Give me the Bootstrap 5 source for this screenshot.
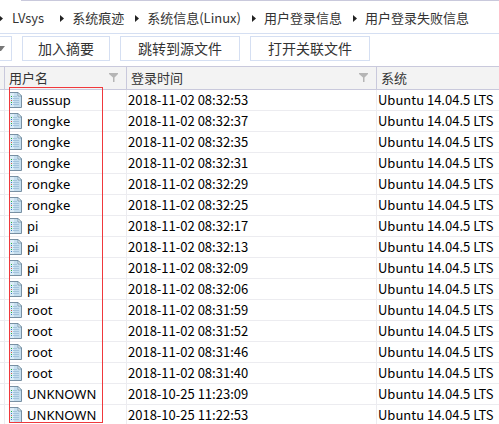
<!DOCTYPE html>
<html lang="zh-CN">
<head>
<meta charset="utf-8">
<meta name="viewport" content="width=device-width, initial-scale=1">
<title>用户登录失败信息</title>
<link href="https://cdn.jsdelivr.net/npm/bootstrap@5.3.0/dist/css/bootstrap.min.css" rel="stylesheet">
<style>
body{font-family:"Noto Sans CJK SC",sans-serif;font-size:13px;line-height:20px;color:#333;background:#fff;overflow:hidden}
.top-rule{height:1px;margin-left:21px;background:#c9c9dc}
.trail{height:33px;border-bottom:1px solid #d5dff2;white-space:nowrap;padding-top:2px}
.trail a{color:#333;text-decoration:none}
.trail svg{flex:none;margin:0 8px 0 11px}
.trail .edge{margin:0 9px 0 0}
.trail .wide{margin-left:16px}
.tools{gap:10px;padding:2px 0 5px}
.tool{height:25px;padding:0 17px;border:1px solid #d5dff2;border-radius:0;background:#fff;color:#333;font-size:14px;line-height:21px}
.tool.short{padding:0 15px}
.tool.drop{width:12px;padding:0;border-left:0}
.log{table-layout:fixed;border-collapse:separate;border-spacing:0;margin:0;border-top:1px solid #c9c9dc;color:#000;white-space:nowrap}
.log th,.log td{padding:0 0 0 1px;border:0 solid #ececf0;border-width:0 1px 1px 0;height:21px;line-height:20px}
.log th{height:23px;font-weight:400;color:#333;background:#f3f3f3;border-color:#c9c9dc;padding-left:4px;line-height:22px}
.log td:first-child,.log th:first-child{padding:0}
.log th:last-child,.log td:last-child{border-right:0}
.log td.user{padding-left:4px;font-family:"Noto Sans","Noto Sans CJK SC",sans-serif}
.user-line{gap:5px}
.c-gutter{width:5px}.c-user{width:122px}.c-time{width:250px}
.filter{padding:0 8px 2px 0;border:0;background:none}
.marked{top:21px;left:9px;width:94px;bottom:3px;border:1px solid #f0383c;pointer-events:none}
</style>
<script src="https://cdn.jsdelivr.net/npm/bootstrap@5.3.0/dist/js/bootstrap.bundle.min.js"></script>
</head>
<body>
<svg class="d-none" aria-hidden="true">
<symbol id="arrow" viewBox="0 0 4 7"><path d="M0 0L4 3.5L0 7Z" fill="#222"/></symbol>
<symbol id="funnel" viewBox="0 0 9 9"><path d="M0 0H9V1L5.5 4.5V9H4V4.5L0 1Z" fill="#b5b5b5"/></symbol>
<symbol id="doc" viewBox="0 0 13 16"><path d="M.5 .5H9L12.5 4V15.5H.5Z" fill="#c5deef" stroke="#7890a3"/><path d="M1 1H5V15H1Z" fill="#dcedf7"/><path d="M9 .5V4H12.5Z" fill="#f6fafc" stroke="#66879e" stroke-width=".7"/><path d="M4 4.5H8M4 6.5H10M4 8.5H10M4 10.5H10M4 12.5H10" stroke="#a3c3dc"/><path d="M2 4H3V5H2ZM2 10H3V11H2Z" fill="#28b23c"/><path d="M2 6H3V7H2ZM2 12H3V13H2Z" fill="#397fc1"/><path d="M2 8H3V9H2Z" fill="#cf5a4b"/></symbol>
</svg>
<div class="top-rule"></div>
<nav class="trail d-flex align-items-center" aria-label="路径">
<svg class="edge" width="3" height="7"><use href="#arrow" width="4" height="7" x="-1"/></svg>
<a href="#">LVsys</a><svg class="wide" width="4" height="7"><use href="#arrow"/></svg>
<a href="#">系统痕迹</a><svg width="4" height="7"><use href="#arrow"/></svg>
<a href="#">系统信息(Linux)</a><svg width="4" height="7"><use href="#arrow"/></svg>
<a href="#">用户登录信息</a><svg width="4" height="7"><use href="#arrow"/></svg>
<a href="#" aria-current="page">用户登录失败信息</a>
</nav>
<div class="tools d-flex">
<button type="button" class="tool drop d-flex align-items-center" aria-label="更多"><svg width="5" height="5" viewBox="0 0 5 5"><path d="M0 0H5L1 5H0Z" fill="#777"/></svg></button>
<button type="button" class="tool short">加入摘要</button>
<button type="button" class="tool">跳转到源文件</button>
<button type="button" class="tool">打开关联文件</button>
</div>
<div class="position-relative">
<table class="log w-100">
<colgroup><col class="c-gutter"><col class="c-user"><col class="c-time"><col></colgroup>
<thead><tr><th></th>
<th scope="col"><div class="d-flex justify-content-between align-items-center">用户名<button type="button" class="filter d-flex" aria-label="筛选用户名"><svg width="9" height="9"><use href="#funnel"/></svg></button></div></th>
<th scope="col"><div class="d-flex justify-content-between align-items-center">登录时间<button type="button" class="filter d-flex" aria-label="筛选登录时间"><svg width="9" height="9"><use href="#funnel"/></svg></button></div></th>
<th scope="col">系统</th></tr></thead>
<tbody id="rows"></tbody>
</table>
<div class="marked position-absolute"></div>
</div>
<script>
const logins=[["aussup","2018-11-02 08:32:53"],["rongke","2018-11-02 08:32:37"],["rongke","2018-11-02 08:32:35"],["rongke","2018-11-02 08:32:31"],["rongke","2018-11-02 08:32:29"],["rongke","2018-11-02 08:32:25"],["pi","2018-11-02 08:32:17"],["pi","2018-11-02 08:32:13"],["pi","2018-11-02 08:32:09"],["pi","2018-11-02 08:32:06"],["root","2018-11-02 08:31:59"],["root","2018-11-02 08:31:52"],["root","2018-11-02 08:31:46"],["root","2018-11-02 08:31:40"],["UNKNOWN","2018-10-25 11:23:09"],["UNKNOWN","2018-10-25 11:22:53"]];
document.getElementById("rows").innerHTML=logins.map(([user,time])=>`<tr><td></td><td class="user"><div class="user-line d-flex align-items-center"><svg width="13" height="16"><use href="#doc"/></svg><span>${user}</span></div></td><td>${time}</td><td>Ubuntu 14.04.5 LTS</td></tr>`).join("");
</script>
</body>
</html>
